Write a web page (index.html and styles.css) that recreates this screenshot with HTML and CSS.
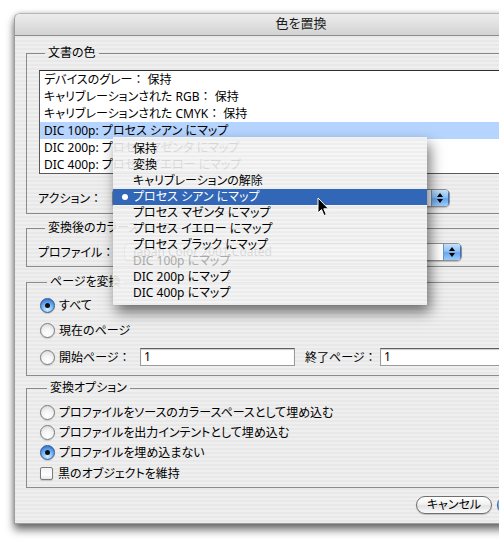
FILE: index.html
```html
<!DOCTYPE html>
<html lang="ja">
<head>
<meta charset="utf-8">
<title>色を置換</title>
<link rel="stylesheet" href="styles.css">
</head>
<body>
<div class="stage">
  <div class="window">
    <div class="titlebar">色を置換</div>
    <div class="content">
      <fieldset class="group g1">
        <legend>文書の色</legend>
        <div class="list">
          <div class="row">デバイスのグレー<span class="colon">：</span> 保持</div>
          <div class="row">キャリブレーションされた RGB<span class="colon">：</span> 保持</div>
          <div class="row">キャリブレーションされた CMYK<span class="colon">：</span> 保持</div>
          <div class="row sel">DIC 100p: プロセス シアン にマップ</div>
          <div class="row">DIC 200p: プロセス マゼンタ にマップ</div>
          <div class="row">DIC 400p: プロセス イエロー にマップ</div>
        </div>
        <div class="field-row">
          <span class="label">アクション<span class="colon">：</span></span>
          <div class="popup">
            <span class="pop-text">プロセス シアン にマップ</span>
            <span class="cap"><svg width="8" height="12" viewBox="0 0 8 12"><path d="M4 1 L7 5 L1 5 Z M4 11 L1 7 L7 7 Z" fill="#000"/></svg></span>
          </div>
        </div>
      </fieldset>

      <fieldset class="group g2">
        <legend>変換後のカラースペース</legend>
        <div class="field-row">
          <span class="label">プロファイル<span class="colon">：</span></span>
          <div class="popup">
            <span class="pop-text">Japan Color 2001 Coated</span>
            <span class="cap"><svg width="8" height="12" viewBox="0 0 8 12"><path d="M4 1 L7 5 L1 5 Z M4 11 L1 7 L7 7 Z" fill="#000"/></svg></span>
          </div>
        </div>
      </fieldset>

      <fieldset class="group g3">
        <legend>ページを変換</legend>
        <div class="opt r1"><span class="radio on"></span><span>すべて</span></div>
        <div class="opt r2"><span class="radio"></span><span>現在のページ</span></div>
        <div class="opt r3">
          <span class="radio"></span><span class="start-label">開始ページ<span class="colon">：</span></span>
          <span class="textfield">1</span>
          <span class="end-label">終了ページ<span class="colon">：</span></span>
          <span class="textfield">1</span>
        </div>
      </fieldset>

      <fieldset class="group g4">
        <legend>変換オプション</legend>
        <div class="opt"><span class="radio"></span><span>プロファイルをソースのカラースペースとして埋め込む</span></div>
        <div class="opt"><span class="radio"></span><span>プロファイルを出力インテントとして埋め込む</span></div>
        <div class="opt"><span class="radio on"></span><span>プロファイルを埋め込まない</span></div>
        <div class="opt chk"><span class="checkbox"></span><span>黒のオブジェクトを維持</span></div>
      </fieldset>

      <div class="buttons">
        <span class="btn">キャンセル</span>
        <span class="btn default">OK</span>
      </div>
    </div>
  </div>

  <div class="menu">
    <div class="item"><span class="mark"></span>保持</div>
    <div class="item"><span class="mark"></span>変換</div>
    <div class="item"><span class="mark"></span>キャリブレーションの解除</div>
    <div class="item active"><span class="mark"><span class="dot"></span></span>プロセス シアン にマップ</div>
    <div class="item"><span class="mark"></span>プロセス マゼンタ にマップ</div>
    <div class="item"><span class="mark"></span>プロセス イエロー にマップ</div>
    <div class="item"><span class="mark"></span>プロセス ブラック にマップ</div>
    <div class="item disabled"><span class="mark"></span>DIC 100p にマップ</div>
    <div class="item"><span class="mark"></span>DIC 200p にマップ</div>
    <div class="item"><span class="mark"></span>DIC 400p にマップ</div>
  </div>

  <svg class="cursor" width="13" height="20" viewBox="0 0 13 20">
    <path d="M1 1 L1 16 L4.5 12.5 L7 18.5 L9.3 17.5 L6.8 11.8 L11.5 11.8 Z" fill="#000" stroke="#fff" stroke-width="1" stroke-linejoin="round"/>
  </svg>
</div>
</body>
</html>
```

FILE: styles.css
```css
* { box-sizing: border-box; }

html, body {
  margin: 0;
  padding: 0;
}

body {
  width: 499px;
  height: 541px;
  overflow: hidden;
  background: #ffffff;
  font-family: "Noto Sans", "Noto Sans CJK JP", sans-serif;
  font-size: 12px;
  color: #000;
  font-feature-settings: "palt";
}

.colon {
  font-feature-settings: normal;
}

.stage {
  position: relative;
  width: 499px;
  height: 541px;
  padding: 13px 0 0 14px;
}

.window {
  width: 574px;
  border: 1px solid #9c9c9c;
  border-top-color: #b5b5b5;
  border-radius: 6px 6px 0 0;
  background: repeating-linear-gradient(to bottom, #efefef 0, #efefef 2px, #e8e8e8 2px, #e8e8e8 4px);
  box-shadow: 0 6px 9px rgba(0, 0, 0, 0.55), 0 0 5px rgba(0, 0, 0, 0.2);
}

.titlebar {
  height: 22px;
  line-height: 19px;
  text-align: center;
  font-size: 13px;
  color: #1a1a1a;
  border-bottom: 1px solid #8c8c8c;
  border-radius: 5px 5px 0 0;
  background: linear-gradient(to bottom, #ececec 0%, #e0e0e0 50%, #d2d2d2 100%);
}

.content {
  padding: 10px 11px 9px 11px;
}

.group {
  margin: 0;
  padding: 0;
  min-width: 0;
  border: 1px solid #8b8b8b;
}

.group legend {
  padding: 0 3px;
  margin-left: 7px;
  line-height: 14px;
  font-size: 12px;
}

.g1 { padding: 10px 12px 5px 11px; }
.g2 { margin-top: 7px; padding: 7px 12px 4px 11px; }
.g3 { margin-top: 8px; padding: 6px 12px 8px 13px; }
.g4 { margin-top: 5px; padding: 7px 12px 4px 13px; }

.list {
  margin-left: 1px;
  background: #fff;
  border: 1px solid #595959;
  border-top-color: #2e2e2e;
}

.row {
  height: 17px;
  line-height: 17px;
  padding-left: 4px;
  white-space: nowrap;
}

.row.sel { background: #b5d4fe; }

.field-row {
  display: flex;
  align-items: center;
  height: 20px;
  gap: 10px;
}

.g1 .field-row { margin-top: 14px; }

.popup {
  display: flex;
  width: 338px;
  height: 18px;
  background: #fff;
  border: 1px solid #8f8f8f;
  border-radius: 4px 5px 5px 4px;
  box-shadow: 0 1px 1px rgba(0, 0, 0, 0.2);
  overflow: hidden;
}

.pop-text {
  flex: 1;
  padding-left: 8px;
  line-height: 16px;
  white-space: nowrap;
}

.cap {
  width: 18px;
  display: flex;
  align-items: center;
  justify-content: center;
  background: linear-gradient(to bottom, #c4e2fd 0%, #8fc2f5 45%, #67a7ef 55%, #9ccdfa 100%);
  border-left: 1px solid #6f93c8;
  border-right: 1px solid #3a6ec6;
}

.opt {
  display: flex;
  align-items: center;
  height: 20px;
  white-space: nowrap;
}

.g3 .r2 { margin-top: 5px; }
.g3 .r3 { margin-top: 7px; }
.g4 .chk { margin-top: 1px; }

.radio {
  width: 15px;
  height: 15px;
  border-radius: 50%;
  border: 1px solid #7b7b7b;
  background: radial-gradient(circle at 50% 75%, #ffffff 0%, #f4f4f4 45%, #d2d2d2 100%);
  box-shadow: 0 1px 1px rgba(0, 0, 0, 0.15);
  margin-right: 4px;
  display: flex;
  align-items: center;
  justify-content: center;
  flex: none;
}

.radio.on {
  border-color: #34588f;
  background: radial-gradient(circle at 50% 80%, #d6efff 0%, #7fbdf5 40%, #3f85e0 75%, #2a5fb5 100%);
}

.radio.on::after {
  content: "";
  width: 5px;
  height: 5px;
  border-radius: 50%;
  background: #111;
}

.checkbox {
  width: 13px;
  height: 13px;
  border: 1px solid #7b7b7b;
  border-radius: 2px;
  background: linear-gradient(to bottom, #f2f2f2, #ffffff 60%, #e8e8e8);
  box-shadow: 0 1px 1px rgba(0, 0, 0, 0.15);
  margin-right: 5px;
  flex: none;
}

.start-label { width: 81px; }

.textfield {
  width: 155px;
  height: 18px;
  line-height: 15px;
  padding-left: 3px;
  background: #fff;
  border: 1px solid #9a9a9a;
  border-top-color: #5e5e5e;
  box-shadow: inset 0 1px 1px rgba(0, 0, 0, 0.2);
  flex: none;
}

.end-label {
  width: 85px;
  padding-left: 10px;
}

.buttons {
  display: flex;
  justify-content: flex-end;
  gap: 5px;
  margin-top: 8px;
}

.btn {
  height: 18px;
  min-width: 76px;
  line-height: 16px;
  text-align: center;
  border: 1px solid #6f6f6f;
  border-radius: 9px;
  background: linear-gradient(to bottom, #ffffff 0%, #f1f1f1 45%, #e2e2e2 55%, #fbfbfb 100%);
  box-shadow: 0 1px 1px rgba(0, 0, 0, 0.2);
}

.btn.default {
  min-width: 79px;
  border-color: #2f5fa8;
  background: linear-gradient(to bottom, #c4e2fd 0%, #8fc2f5 45%, #67a7ef 55%, #9ccdfa 100%);
}

.menu {
  position: absolute;
  left: 113px;
  top: 137px;
  width: 314px;
  height: 168px;
  padding: 4px 0;
  background: repeating-linear-gradient(to bottom, rgba(244, 244, 244, 0.9) 0, rgba(244, 244, 244, 0.9) 2px, rgba(236, 236, 236, 0.9) 2px, rgba(236, 236, 236, 0.9) 4px);
  box-shadow: 3px 7px 13px rgba(0, 0, 0, 0.55);
}

.item {
  display: flex;
  align-items: center;
  height: 16px;
  line-height: 16px;
  white-space: nowrap;
}

.mark {
  width: 20px;
  padding-left: 9px;
  display: flex;
  align-items: center;
  flex: none;
}

.dot {
  width: 6px;
  height: 6px;
  border-radius: 50%;
  background: #fff;
}

.item.active {
  background: #3266b6;
  color: #fff;
}

.item.disabled { color: #a9a9a9; }

.cursor {
  position: absolute;
  left: 317px;
  top: 197px;
}
```
